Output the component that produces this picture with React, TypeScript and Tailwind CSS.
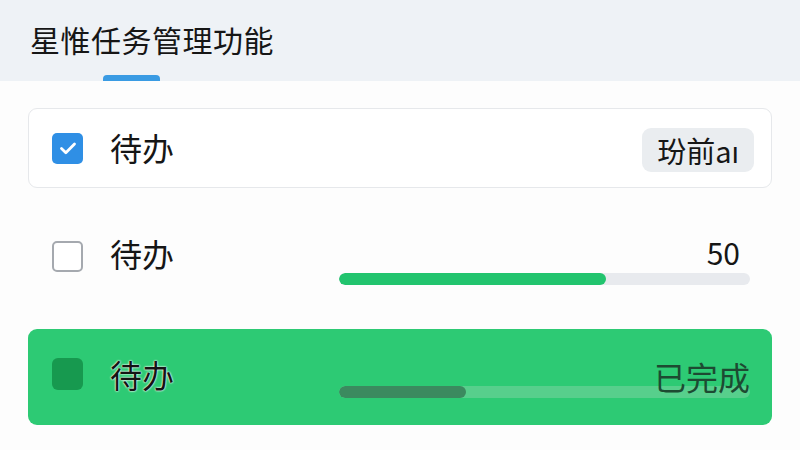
import React from 'react'

const font = { fontFamily: '"Noto Sans CJK SC", "Noto Sans", sans-serif' }

function Checked() {
  return (
    <span className="flex h-[31px] w-[31px] shrink-0 items-center justify-center rounded-[5px] bg-[#2f8fe5]">
      <svg viewBox="0 0 24 24" className="h-[26px] w-[26px]" fill="none" stroke="white" strokeWidth={2.6} strokeLinecap="round" strokeLinejoin="round">
        <path d="M6 12.5l4 3.8 8-8" />
      </svg>
    </span>
  )
}

function Bar({ fill, track, width }: { fill: string; track: string; width: string }) {
  return (
    <div className={`h-[12px] w-full overflow-hidden rounded-full ${track}`}>
      <div className={`h-full rounded-full ${fill} ${width}`} />
    </div>
  )
}

export default function App() {
  return (
    <div className="h-[450px] w-[800px] overflow-hidden bg-[#fdfdfd] text-[#161616]" style={font}>
      {/* Header with tab indicator */}
      <div className="flex h-[81px] flex-col bg-[#eef2f6] pl-[30px] pt-[24px]">
        <h1 className="text-[30px] font-normal leading-none tracking-[0.5px]">星惟任务管理功能</h1>
        <div className="ml-[73px] mt-auto h-[6px] w-[57px] rounded-t-[4px] bg-[#3a9be3]" />
      </div>

      <div className="flex flex-col px-[28px] pt-[27px]">
        {/* Checked row */}
        <div className="flex h-[80px] items-center rounded-[9px] border border-[#e6e8eb] bg-white pl-[23px] pr-[17px]">
          <Checked />
          <span className="-mt-[2px] ml-[27px] text-[32px] leading-none">待办</span>
          <span className="ml-auto mt-[4px] flex h-[44px] items-center rounded-[9px] bg-[#eaedf0] px-[15px] text-[29px] leading-none">
            玢前aı
          </span>
        </div>

        {/* Unchecked row with progress */}
        <div className="mt-[20px] flex h-[96px] items-center pl-[24px] pr-[22px]">
          <span className="h-[31px] w-[31px] shrink-0 rounded-[5px] border-2 border-[#a5a9af] bg-white" />
          <span className="-mt-[6px] ml-[27px] text-[32px] leading-none">待办</span>
          <div className="ml-auto mt-[10px] flex w-[411px] flex-col items-end">
            <span className="pr-[10px] text-[30px] leading-none">50</span>
            <div className="mt-[6px] w-full">
              <Bar fill="bg-[#22c46e]" track="bg-[#e8eaee]" width="w-[65%]" />
            </div>
          </div>
        </div>

        {/* Completed row */}
        <div className="mt-[25px] flex h-[96px] items-center rounded-[9px] bg-[#2dca74] pl-[24px] pr-[22px]">
          <span className="-mt-[6px] h-[32px] w-[31px] shrink-0 rounded-[6px] bg-[#17994f]" />
          <span className="-mt-[6px] ml-[27px] text-[32px] leading-none text-[#141414] [text-shadow:0_0_2px_#fff,0_0_2px_#fff]">待办</span>
          <div className="ml-auto mt-[4px] flex w-[411px] flex-col items-end">
            <span className="relative z-10 text-[32px] leading-none text-[#1d4a32]">已完成</span>
            <div className="-mt-[6px] w-full">
              <Bar fill="bg-[#3b8a5f]" track="bg-[#57cf8c]" width="w-[31%]" />
            </div>
          </div>
        </div>
      </div>
    </div>
  )
}
